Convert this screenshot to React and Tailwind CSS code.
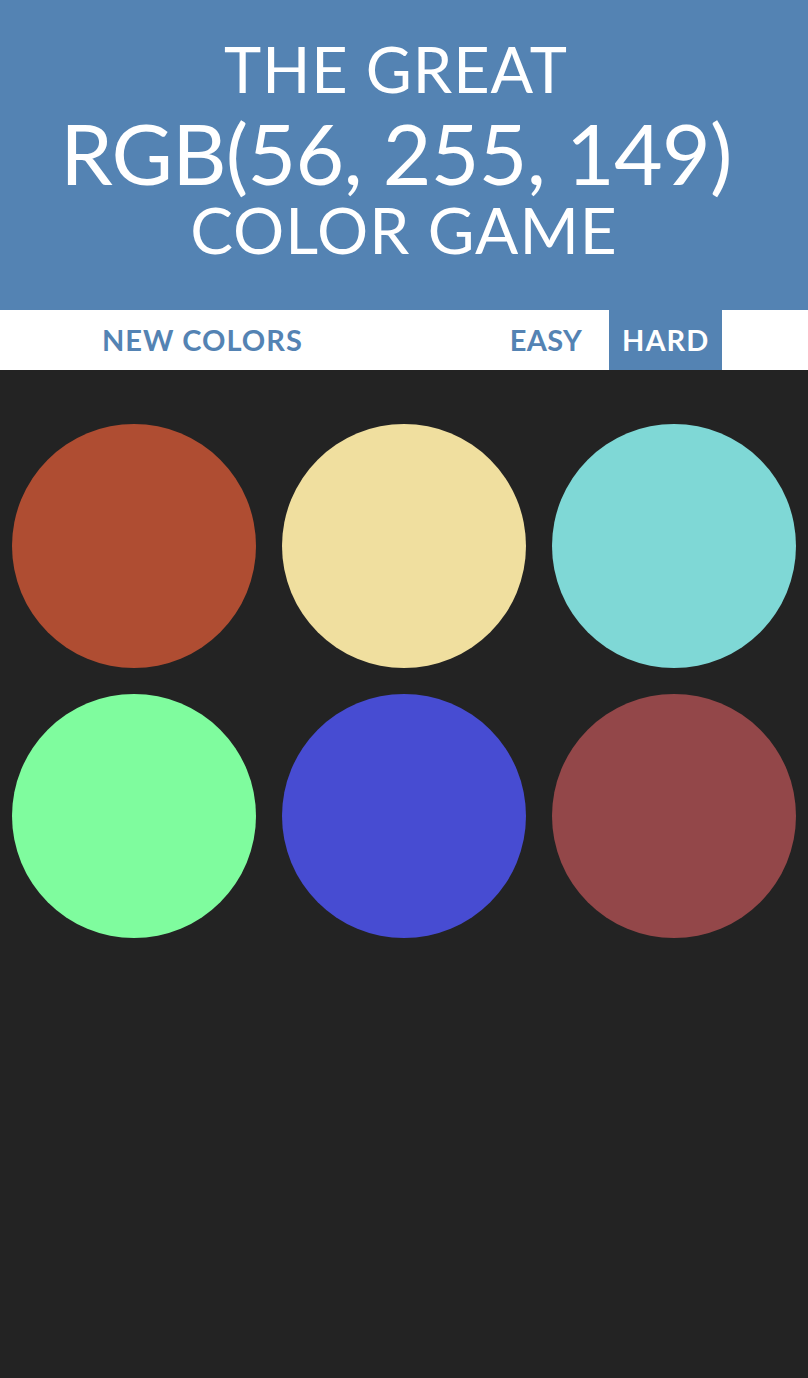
import React from 'react';

const circles = ['#af4d32', '#f0df9f', '#7fd8d6', '#7ffc9e', '#474cd2', '#934749'];

function App() {
  return (
    <div className="min-h-screen bg-[#232323] font-['Lato','Liberation_Sans',sans-serif]">
      <header className="h-[310px] bg-[#5483b3] text-white text-center uppercase flex flex-col pt-[37px]">
        <div className="text-[63px] leading-[63px] font-normal tracking-[1px] pr-[16px]">The Great</div>
        <div className="text-[84px] leading-[105px] font-normal tracking-[-0.7px] pr-[16px]">RGB(56, 255, 149)</div>
        <div className="text-[64px] leading-[50px] font-normal tracking-[1px]">Color Game</div>
      </header>

      <nav className="h-[60px] bg-white flex items-stretch pl-[87px]">
        <button className="px-[15px] text-[29px] font-bold uppercase text-[#5483b3] tracking-[1px]">New Colors</button>
        <span className="w-[177px]" />
        <button className="px-[15px] text-[29px] font-bold uppercase text-[#5483b3] tracking-[0.3px]">Easy</button>
        <button className="ml-[12px] px-[13px] text-[29px] font-bold uppercase text-white bg-[#5483b3] tracking-[1px]">Hard</button>
      </nav>

      <div className="pt-[54px] px-[12px] grid grid-cols-3 gap-[26px]">
        {circles.map(c => (
          <div key={c} className="w-[244px] h-[244px] rounded-full" style={{ backgroundColor: c }} />
        ))}
      </div>
    </div>
  );
}

export default App;
